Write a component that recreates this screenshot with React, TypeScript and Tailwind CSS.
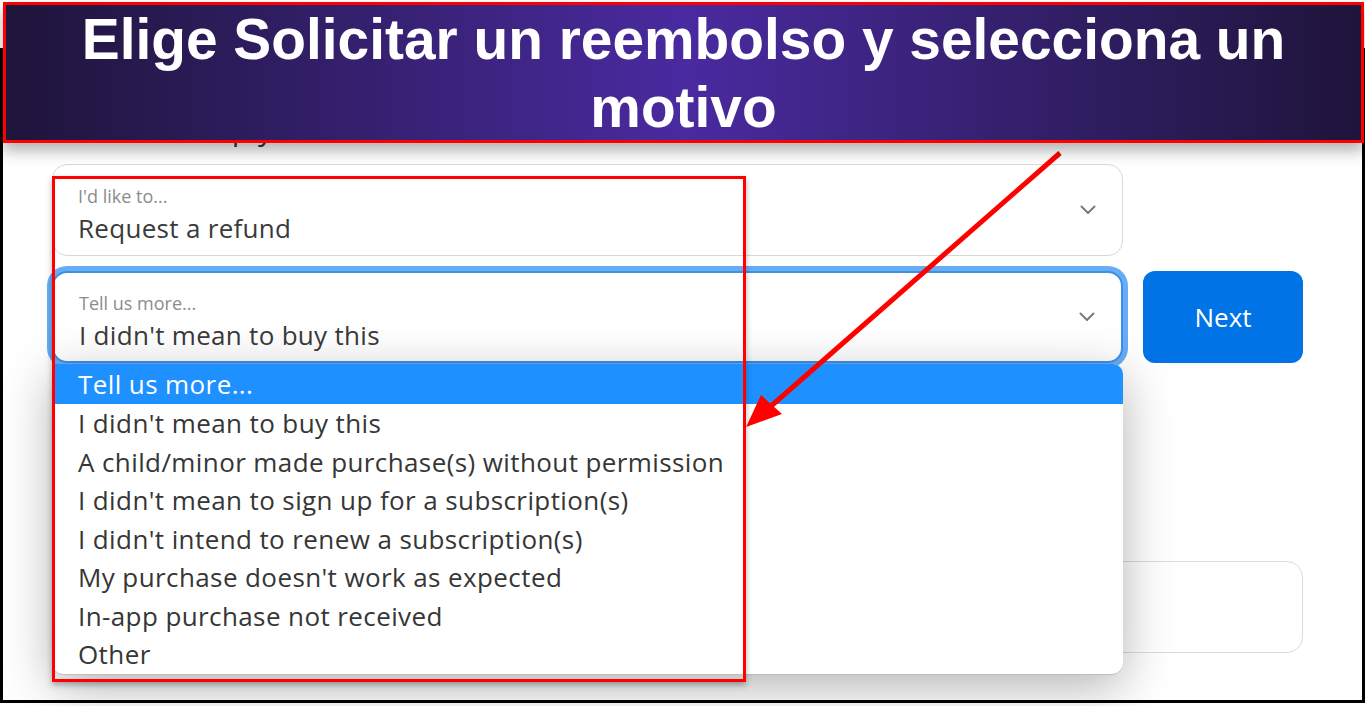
const reasons = [
  "I didn't mean to buy this",
  'A child/minor made purchase(s) without permission',
  "I didn't mean to sign up for a subscription(s)",
  "I didn't intend to renew a subscription(s)",
  "My purchase doesn't work as expected",
  'In-app purchase not received',
  'Other',
];

function Chevron() {
  return (
    <svg width="16" height="10" viewBox="0 0 16 10" className="shrink-0">
      <path d="M1.5 1.5 L8 8 L14.5 1.5" fill="none" stroke="#7a7a7a" strokeWidth="2" strokeLinecap="round" strokeLinejoin="round" />
    </svg>
  );
}

function SelectBox({ label, value, focused }: { label: string; value: string; focused?: boolean }) {
  return (
    <div
      className={`flex items-center justify-between h-[92px] rounded-[15px] bg-white pl-[25px] pr-[26px] ${
        focused
          ? 'border-2 border-[#3d8fe9] shadow-[0_0_0_5px_#66adf6]'
          : 'border border-[#d8d8d8]'
      }`}
    >
      <div className="flex flex-col pt-[9px]">
        <span className="text-[18px] leading-[22px] text-[#8c8c8c]">{label}</span>
        <span className="mt-[4px] text-[26px] leading-[34px] tracking-[0.3px] text-[#3a3a3a]">{value}</span>
      </div>
      <Chevron />
    </div>
  );
}

export default function App() {
  return (
    <div className="relative w-[1365px] h-[706px] bg-white overflow-hidden font-['Open_Sans',sans-serif]">
      {/* underlying page screenshot */}
      <div className="pt-[48px]">
        <div className="w-[1365px] h-[655px] border-[3px] border-black bg-white pl-[49px] pt-[57px]">
          <h2 className="text-[30px] leading-[42px] text-[#333]">Could we help you?</h2>

          <div className="mt-[14px] w-[1071px]">
            <div className="h-[93px]">
              <SelectBox label="I'd like to..." value="Request a refund" />
            </div>
          </div>

          <div className="mt-[14px] flex gap-[20px]">
            <div className="relative w-[1071px]">
              <SelectBox label="Tell us more..." value="I didn't mean to buy this" focused />
              <div className="absolute left-0 top-full mt-[1px] w-[1071px] z-10 bg-white rounded-b-[12px] rounded-tr-[10px] overflow-hidden border-b border-[#bdbdbd] shadow-[0_12px_50px_rgba(0,0,0,0.3)]">
                <div className="h-[40px] bg-[#1e90ff] pl-[26px] text-[26px] leading-[40px] tracking-[0.4px] text-white">Tell us more...</div>
                {reasons.map((r) => (
                  <div key={r} className="h-[38.5px] pl-[26px] text-[26px] leading-[38px] tracking-[0.4px] text-[#363636]">
                    {r}
                  </div>
                ))}
              </div>
            </div>
            <button className="w-[160px] h-[92px] rounded-[12px] bg-[#0073e6] text-white text-[26px]">Next</button>
          </div>

          <div className="mt-[198px] w-[1251px] h-[92px] rounded-[16px] border border-[#dcdcdc]" />
        </div>
      </div>

      {/* annotation banner */}
      <div className="absolute left-[3px] top-[2px] w-[1361px] h-[141px] z-30 border-[3px] border-[#ff0000] bg-linear-to-r from-[#1f143b] via-[#4a2aa0] to-[#1f143b] shadow-[0_8px_14px_rgba(0,0,0,0.3)]">
        <p className="text-center text-white font-['Liberation_Sans',Arial,sans-serif] font-bold text-[58px] leading-[68px] scale-x-[0.98]">
          Elige Solicitar un reembolso y selecciona un
          <br />
          motivo
        </p>
      </div>

      {/* red highlight box */}
      <div className="absolute left-[52px] top-[176px] w-[694px] h-[506px] z-20 border-[3px] border-[#ff0000] shadow-[0_3px_6px_rgba(0,0,0,0.3)]" />

      {/* arrow */}
      <svg className="absolute left-0 top-0 z-20 pointer-events-none" width="1365" height="706" viewBox="0 0 1365 706">
        <line x1="1060" y1="153" x2="770" y2="407" stroke="#ff0000" strokeWidth="5" />
        <polygon points="746,427 761,395 782,414" fill="#ff0000" />
      </svg>
    </div>
  );
}
